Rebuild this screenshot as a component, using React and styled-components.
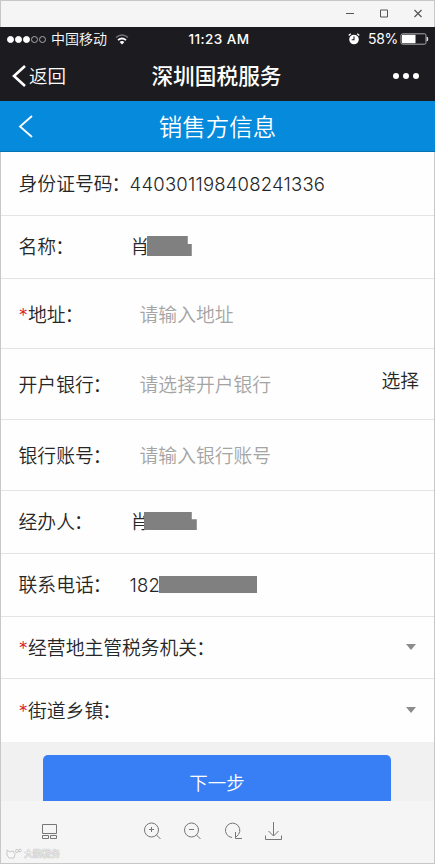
import React from "react";
import styled, { createGlobalStyle } from "styled-components";

const GlobalStyle = createGlobalStyle`
  * {
    box-sizing: border-box;
  }

  body {
    margin: 0;
    font-family: Inter, "Noto Sans CJK SC", sans-serif;
    color: #262626;
  }
`;

const W = {};

W.Window = styled.div`
  width: 435px;
  height: 864px;
  display: flex;
  flex-direction: column;
  background: #f5f5f5;
  overflow: hidden;
  box-shadow: inset 0 0 0 1px #c8c8c8;
`;

W.TitleBar = styled.div`
  flex: 0 0 27px;
  display: flex;
  justify-content: flex-end;
  align-items: center;
  gap: 26px;
  padding-right: 13px;

  svg {
    display: block;
  }
`;

W.Toolbar = styled.div`
  flex: 1;
  display: flex;
  flex-direction: column;
  padding-top: 19px;
`;

W.Tools = styled.div`
  display: flex;
  align-items: center;
  padding-left: 41px;
  height: 21px;
`;

W.Tool = styled.div`
  display: flex;
  width: 18px;
  margin-right: ${props => props.$gap || 0}px;
`;

W.Watermark = styled.div`
  display: flex;
  align-items: center;
  gap: 2px;
  height: 15px;
  margin: 5px 0 0 6px;
  color: #f8f8f8;
  font-size: 9px;
  line-height: 15px;
  text-shadow: 0 0 1px #999, 0 0 1px #aaa;
`;

const S = {};

S.StatusBar = styled.div`
  flex: 0 0 24px;
  display: grid;
  grid-template-columns: 1fr auto 1fr;
  align-items: center;
  padding: 0 6px 0 7px;
  background: #1c1c20;
  color: #fff;
  font-size: 14px;
  line-height: 24px;
`;

S.Carrier = styled.div`
  display: flex;
  align-items: center;
  font-weight: 350;
`;

S.Wifi = styled.svg`
  margin-left: 8px;
`;

S.Dots = styled.div`
  display: flex;
  gap: 1px;
  margin-right: 5px;
`;

S.Dot = styled.i`
  width: 7px;
  height: 7px;
  border-radius: 50%;
  border: 1px solid ${props => (props.$on ? "#fff" : "#aaa")};
  background: ${props => (props.$on ? "#fff" : "none")};
`;

S.Time = styled.div`
  margin-left: 2px;
  font-size: 13.5px;
  font-weight: 500;
  letter-spacing: 0.4px;
`;

S.Power = styled.div`
  display: flex;
  justify-content: flex-end;
  align-items: center;
  font-size: 14px;
  letter-spacing: -0.3px;

  svg:first-child {
    margin-right: 8px;
  }

  svg:last-child {
    margin-left: 2px;
  }
`;

const N = {};

N.NavBar = styled.div`
  flex: 0 0 50px;
  display: grid;
  grid-template-columns: 1fr auto 1fr;
  align-items: center;
  padding: 0 16px 0 12px;
  background: #1c1c20;
  color: #fff;
`;

N.Back = styled.div`
  display: flex;
  align-items: center;
  gap: 3px;
  font-size: 18.5px;
  font-weight: 350;
  line-height: 24px;
  padding-bottom: 1px;
`;

N.Title = styled.div`
  margin-left: 2px;
  font-size: 21.7px;
  font-weight: 500;
  line-height: 30px;
`;

N.More = styled.div`
  display: flex;
  justify-content: flex-end;
  gap: 4px;

  i {
    width: 6px;
    height: 6px;
    border-radius: 50%;
    background: #fff;
  }
`;

N.PageBar = styled.div`
  flex: 0 0 51px;
  display: grid;
  grid-template-columns: 1fr auto 1fr;
  align-items: center;
  padding: 0 18px;
  background: #068adc;
  border-bottom: 1px solid #0871b5;
  color: #fff;
  font-size: 23.5px;
  font-weight: 350;

  svg {
    margin-top: 1px;
  }
`;

const F = {};

F.Form = styled.div`
  flex: 0 0 590px;
  background: #fefefe;
  border: solid #c8c8c8;
  border-width: 0 1px;
`;

F.Row = styled.div`
  display: flex;
  align-items: center;
  height: ${props => props.$height}px;
  padding: ${props => (props.$height > 65 ? 4 : 2)}px 15px 0 17.6px;
  border-bottom: ${props => (props.$last ? 0 : 1)}px solid #e4e4e4;
  font-size: 18.8px;
  font-weight: 350;
  line-height: 28px;
  white-space: nowrap;
`;

F.Label = styled.div`
  flex: 0 0 111px;
`;

/* "halt" trims the blank half of the full-width colon */
F.Colon = styled.span`
  font-feature-settings: "halt";
  margin-left: -1px;
`;

F.Star = styled.span`
  display: inline-block;
  width: 9.5px;
  color: #d8222a;
`;

F.Value = styled.div`
  display: flex;
  align-items: center;
  padding-left: ${props => (props.$cjk ? 1 : 0)}px;
  font-size: ${props => (props.$cjk ? 18.8 : 18.5)}px;
  letter-spacing: ${props => (props.$cjk ? 0 : 0.2)}px;
`;

F.Digits = styled.span`
  padding-bottom: 2px;
`;

F.Placeholder = styled.div`
  padding-left: 10px;
  color: #a4a4a4;
`;

F.Pick = styled.div`
  margin-left: auto;
  padding-bottom: 9px;
`;

F.Caret = styled.i`
  margin: 0 3px 3px auto;
  border: solid transparent;
  border-width: 6px 5.5px 0;
  border-top-color: #8c8c8c;
`;

F.Mask = styled.span`
  width: ${props => props.$width}px;
  height: ${props => props.$height}px;
  margin: 0 0 ${props => props.$lift || 0}px ${props => props.$shift || 0}px;
  background: #808080;
  clip-path: ${props =>
    props.$notch
      ? `polygon(0 0, calc(100% - ${props.$notch}px) 0, calc(100% - ${props.$notch}px) 40%, 100% 40%, 100% 100%, 0 100%)`
      : "none"};
`;

F.Footer = styled.div`
  flex: 0 0 59px;
  padding: 13px 43px 0;
  background: #f1f1f1;
  border: solid #c8c8c8;
  border-width: 0 1px;
  overflow: hidden;
`;

F.Button = styled.button`
  display: block;
  width: 348px;
  height: 54px;
  margin-left: -1px;
  padding: 0;
  border: 0;
  border-radius: 5px 5px 0 0;
  background: #387ef5;
  color: #fff;
  font-family: inherit;
  font-size: 18.5px;
  font-weight: 350;
`;

const rows = [
  { label: "身份证号码", height: 64, value: "440301198408241336" },
  {
    label: "名称",
    height: 63,
    value: "肖",
    cjk: true,
    mask: { $width: 45, $height: 20, $notch: 4, $shift: -2.6, $lift: 4 }
  },
  { label: "地址", height: 70, required: true, placeholder: "请输入地址" },
  { label: "开户银行", height: 71, placeholder: "请选择开户银行", pick: "选择" },
  { label: "银行账号", height: 71, placeholder: "请输入银行账号" },
  {
    label: "经办人",
    height: 63,
    value: "肖",
    cjk: true,
    mask: { $width: 53, $height: 18, $notch: 5, $shift: -5.6, $lift: 4 }
  },
  {
    label: "联系电话",
    height: 63,
    value: "182",
    mask: { $width: 98, $height: 17, $shift: -0.8, $lift: 4 }
  },
  { label: "经营地主管税务机关", height: 62, required: true, caret: true },
  { label: "街道乡镇", height: 63, required: true, caret: true }
];

const Chevron = ({ width, height, stroke }) => (
  <svg width={width} height={height} fill="none" stroke="#fff" strokeWidth={stroke}>
    <path d={`M${width - 1} 1L2 ${height / 2}L${width - 1} ${height - 1}`} />
  </svg>
);

const WindowButtons = () => (
  <W.TitleBar>
    <svg width="8" height="9" stroke="#555">
      <path d="M0 4.5h8" />
    </svg>
    <svg width="8" height="9" fill="none" stroke="#555">
      <path d="M.5 1h7v7h-7z" />
    </svg>
    <svg width="8" height="9" stroke="#555" strokeWidth="1.2">
      <path d="M.5 1l7 7M7.5 1l-7 7" />
    </svg>
  </W.TitleBar>
);

const StatusBar = () => (
  <S.StatusBar>
    <S.Carrier>
      <S.Dots>
        {[1, 1, 1, 0, 0].map((on, i) => (
          <S.Dot key={i} $on={on} />
        ))}
      </S.Dots>
      中国移动
      <S.Wifi width="14" height="11" fill="none">
        <path d="M1 3.5Q7-1.5 13 3.5" stroke="#77777a" strokeWidth="1.5" />
        <path d="M3 6.1Q7 2.8 11 6.1" stroke="#fff" strokeWidth="1.8" />
        <path d="M4.6 8Q7 6 9.4 8L7 10.5z" fill="#fff" />
      </S.Wifi>
    </S.Carrier>
    <S.Time>11:23 AM</S.Time>
    <S.Power>
      <svg width="12" height="12" fill="none">
        <circle cx="6" cy="6.5" r="4.8" fill="#fff" />
        <path d="M.7 2.5L2.8.8M11.3 2.5L9.2.8" stroke="#fff" strokeWidth="1.3" />
        <path d="M6 3.5v3.3H3.7" stroke="#1c1c20" strokeWidth="1.1" />
      </svg>
      58%
      <svg width="29" height="12" fill="none">
        <rect x="1" y=".8" width="25" height="10.4" rx="1.5" stroke="#aaa" />
        <rect x="2" y="1.8" width="13.5" height="8.4" fill="#fff" />
        <path d="M27.2 4q1.3 2 0 4z" fill="#ddd" stroke="#ddd" />
      </svg>
    </S.Power>
  </S.StatusBar>
);

const FormRow = ({ row, last }) => (
  <F.Row $height={row.height} $last={last}>
    <F.Label>
      {row.required && <F.Star>*</F.Star>}
      {row.label}
      <F.Colon>：</F.Colon>
    </F.Label>
    {row.value && (
      <F.Value $cjk={row.cjk}>
        {row.cjk ? row.value : <F.Digits>{row.value}</F.Digits>}
        {row.mask && <F.Mask {...row.mask} />}
      </F.Value>
    )}
    {row.placeholder && <F.Placeholder>{row.placeholder}</F.Placeholder>}
    {row.pick && <F.Pick>{row.pick}</F.Pick>}
    {row.caret && <F.Caret />}
  </F.Row>
);

const Toolbar = () => (
  <W.Toolbar>
    <W.Tools>
      <W.Tool $gap={84}>
        <svg width="18" height="20" fill="none" stroke="#777">
          <path d="M1.5 3.5h14v9h-14zM1.5 14.5h6v3h-6zM9.5 14.5h6v3h-6z" />
        </svg>
      </W.Tool>
      <W.Tool $gap={22}>
        <svg width="20" height="20" fill="none" stroke="#777">
          <circle cx="8.5" cy="9" r="7" />
          <path d="M6 8.5h5M8.5 6v5M13.5 14l4 4" />
        </svg>
      </W.Tool>
      <W.Tool $gap={23}>
        <svg width="20" height="20" fill="none" stroke="#777">
          <circle cx="8.5" cy="9" r="7" />
          <path d="M6 8.5h5M13.5 14l4 4" />
        </svg>
      </W.Tool>
      <W.Tool $gap={22}>
        <svg width="20" height="20" fill="none" stroke="#777">
          <path d="M8 16.5A7.2 7.2 0 1 1 14.5 13.5L11.5 16.5M11.5 11v6.5h6.5" />
        </svg>
      </W.Tool>
      <W.Tool>
        <svg width="19" height="20" fill="none" stroke="#777">
          <path d="M9.5 1v14M4.5 10l5 5 5-5M1.5 14.5v4h16v-4" />
        </svg>
      </W.Tool>
    </W.Tools>
    <W.Watermark>
      <svg width="16" height="12" fill="#f8f8f8" stroke="#bbb" strokeWidth=".8">
        <path d="M1 2l3 2 3-1 2 3-1 4H3L1 7z" />
        <circle cx="11" cy="3" r="1.5" />
        <circle cx="14" cy="2.5" r="1.3" />
      </svg>
      大鹏税务
    </W.Watermark>
  </W.Toolbar>
);

const App = () => (
  <W.Window>
    <GlobalStyle />
    <WindowButtons />
    <StatusBar />
    <N.NavBar>
      <N.Back>
        <Chevron width={14} height={22} stroke={2.6} />
        返回
      </N.Back>
      <N.Title>深圳国税服务</N.Title>
      <N.More>
        <i />
        <i />
        <i />
      </N.More>
    </N.NavBar>
    <N.PageBar>
      <Chevron width={15} height={23} stroke={1.8} />
      销售方信息
    </N.PageBar>
    <F.Form>
      {rows.map((row, i) => (
        <FormRow key={row.label} row={row} last={i === rows.length - 1} />
      ))}
    </F.Form>
    <F.Footer>
      <F.Button>下一步</F.Button>
    </F.Footer>
    <Toolbar />
  </W.Window>
);

export default App;
